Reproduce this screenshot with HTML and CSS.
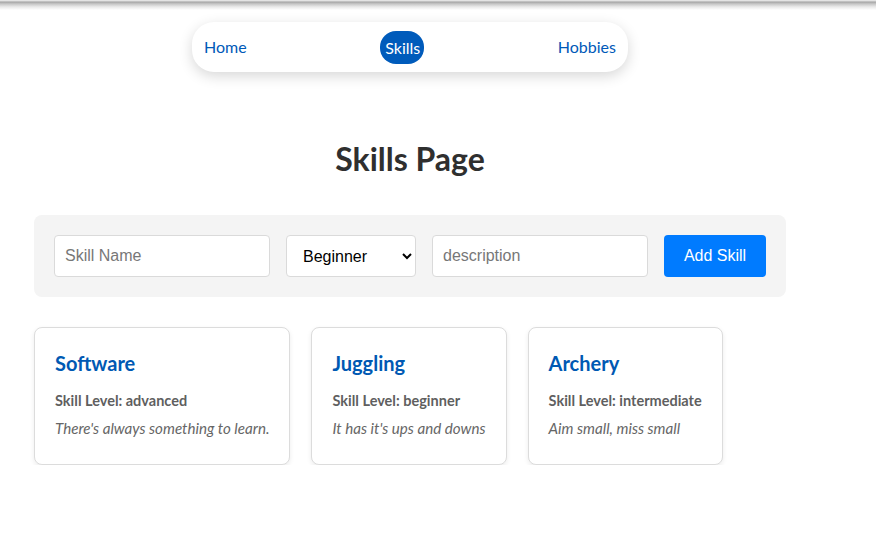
FILE: index.html
```html
<!DOCTYPE html>
<html lang="en">
<head>
<meta charset="utf-8">
<title>Skills Page</title>
<link rel="stylesheet" href="styles.css">
</head>
<body>
<div class="top-shadow"></div>
<div class="container">
  <nav class="nav">
    <a class="nav-link" href="#">Home</a>
    <a class="nav-link active" href="#">Skills</a>
    <a class="nav-link" href="#">Hobbies</a>
  </nav>
  <h1 class="page-title">Skills Page</h1>
  <form class="skill-form">
    <input class="field field-name" type="text" placeholder="Skill Name">
    <select class="field field-level">
      <option>Beginner</option>
      <option>Intermediate</option>
      <option>Advanced</option>
    </select>
    <input class="field field-desc" type="text" placeholder="description">
    <button class="add-btn" type="button">Add Skill</button>
  </form>
  <div class="cards">
    <div class="card">
      <h3 class="card-title">Software</h3>
      <p class="card-level">Skill Level: advanced</p>
      <p class="card-desc">There's always something to learn.</p>
    </div>
    <div class="card">
      <h3 class="card-title">Juggling</h3>
      <p class="card-level">Skill Level: beginner</p>
      <p class="card-desc">It has it's ups and downs</p>
    </div>
    <div class="card">
      <h3 class="card-title">Archery</h3>
      <p class="card-level">Skill Level: intermediate</p>
      <p class="card-desc">Aim small, miss small</p>
    </div>
  </div>
</div>
</body>
</html>
```
FILE: styles.css
```css
* { box-sizing: border-box; }
html, body { margin: 0; padding: 0; background: #fff; }
body { font-family: Lato, "Open Sans", sans-serif; color: #333; }

.top-shadow {
  height: 10px;
  background: linear-gradient(to bottom, #ececec 0px, #dcdcdc 1px, #a6a6a6 2px, #c8c8c8 4px, #ebebeb 7px, #ffffff 10px);
}

.container {
  width: 752px;
  margin-left: 34px;
}

.nav {
  width: 436px;
  height: 50px;
  margin: 12px auto 0;
  padding: 0 12px 2px;
  display: flex;
  justify-content: space-between;
  align-items: center;
  background: #fff;
  border-radius: 22px;
  box-shadow: 0 4px 14px rgba(0, 0, 0, 0.16);
}

.nav-link {
  font-size: 16px;
  color: #0059b8;
  text-decoration: none;
}

.nav-link.active {
  background: #005bbb;
  color: #fff;
  padding: 7px 4px 7px 5px;
  border-radius: 16px;
  margin-top: 2px;
}

.page-title {
  margin: 67px 0 36px;
  text-align: center;
  font-size: 32px;
  font-weight: 700;
  color: #2f2f2f;
  line-height: 40px;
}

.skill-form {
  display: flex;
  gap: 16px;
  padding: 20px;
  background: #f4f4f4;
  border-radius: 8px;
}

.field {
  height: 42px;
  padding: 10px;
  border: 1px solid #dadada;
  border-radius: 4px;
  background: #fff;
  font-family: "Liberation Sans", Arial, sans-serif;
  font-size: 16px;
  color: #000;
}
.field::placeholder { color: #777; }
.field-name, .field-desc { width: 216px; }
.field-level { width: 130px; padding: 10px 8px 10px 12px; }

.add-btn {
  width: 102px;
  height: 42px;
  border: none;
  border-radius: 4px;
  background: #007bff;
  color: #fff;
  font-family: "Liberation Sans", Arial, sans-serif;
  font-size: 16px;
}

.cards {
  display: flex;
  flex-wrap: wrap;
  gap: 21px;
  margin-top: 30px;
}

.card {
  padding: 23px 20px 19px;
  border: 1px solid #dcdcdc;
  border-radius: 8px;
  background: #fff;
  box-shadow: 0 2px 5px rgba(0, 0, 0, 0.08);
}

.card-title {
  margin: 0 0 17px;
  font-size: 20px;
  font-weight: 700;
  line-height: 24px;
  color: #0059b3;
}

.card-level {
  margin: 0 0 10px;
  font-size: 14.5px;
  font-weight: 700;
  color: #5f5f5f;
}

.card-desc {
  margin: 0 0 8px;
  font-size: 15.15px;
  font-style: italic;
  color: #666;
}
```
